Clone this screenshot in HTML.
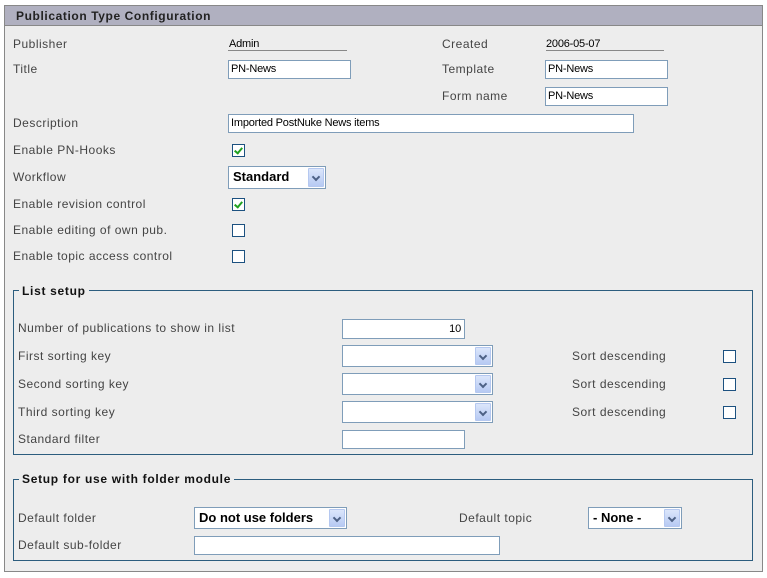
<!DOCTYPE html>
<html><head><style>
*{margin:0;padding:0;box-sizing:border-box}
body{width:767px;height:578px;background:#fff;font-family:"Liberation Sans",sans-serif;font-size:12px;color:#333;position:relative;overflow:hidden}
.a{position:absolute;white-space:nowrap}
.l{position:absolute;white-space:nowrap;line-height:14px;color:#444;letter-spacing:0.5px}
.inp{position:absolute;background:#fff;border:1px solid #7f9db9;font-size:11px;line-height:17px;padding-left:2px;color:#000;letter-spacing:-0.2px}
.cb{position:absolute;width:13px;height:13px;border:1px solid #1c5180;background:#fff}
.cb.on::after{content:"";position:absolute;left:3px;top:1px;width:3px;height:6px;border:solid #21a121;border-width:0 2px 2px 0;transform:rotate(40deg)}
.sel{position:absolute;background:#fff;border:1px solid #7f9db9;font-weight:bold;font-size:13px;line-height:20px;padding-left:4px;color:#000}
.sel .b{position:absolute;right:1px;top:1px;bottom:1px;width:16px;background:linear-gradient(#dbe6fb,#b7caf3);border:1px solid #b5c8f0;border-radius:1px}
.sel .b::after{content:"";position:absolute;left:4px;top:5px;width:4px;height:4px;border:solid #4d6185;border-width:0 2px 2px 0;transform:rotate(45deg)}
.fs{position:absolute;border:1px solid #2c5d7e}
.lg{position:absolute;background:#ededed;font-weight:bold;padding:0 3px;line-height:14px;color:#111;letter-spacing:0.7px}
.ul{position:absolute;height:1px;background:#888}
</style></head><body>
<div class="a" style="left:4px;top:5px;width:759px;height:567px;border:1px solid #888;background:#ededed"></div>
<div class="a" style="left:5px;top:6px;width:757px;height:20px;background:#b0b0c0;border-bottom:1px solid #888"></div>
<div class="a" style="left:16px;top:9px;font-weight:bold;color:#222;line-height:14px;letter-spacing:0.6px">Publication Type Configuration</div>

<div class="l" style="left:13px;top:37px">Publisher</div>
<div class="l" style="left:229px;top:37px;font-size:11px;color:#000;letter-spacing:-0.2px">Admin</div>
<div class="ul" style="left:228px;top:50px;width:119px"></div>
<div class="l" style="left:442px;top:37px">Created</div>
<div class="l" style="left:546px;top:37px;font-size:11px;color:#000;letter-spacing:-0.2px">2006-05-07</div>
<div class="ul" style="left:546px;top:50px;width:118px"></div>

<div class="l" style="left:13px;top:62px">Title</div>
<div class="inp" style="left:228px;top:60px;width:123px;height:19px">PN-News</div>
<div class="l" style="left:442px;top:62px">Template</div>
<div class="inp" style="left:545px;top:60px;width:123px;height:19px">PN-News</div>
<div class="l" style="left:442px;top:89px">Form name</div>
<div class="inp" style="left:545px;top:87px;width:123px;height:19px">PN-News</div>

<div class="l" style="left:13px;top:116px">Description</div>
<div class="inp" style="left:228px;top:114px;width:406px;height:19px">Imported PostNuke News items</div>
<div class="l" style="left:13px;top:143px">Enable PN-Hooks</div>
<div class="cb on" style="left:232px;top:144px"></div>
<div class="l" style="left:13px;top:170px">Workflow</div>
<div class="sel" style="left:228px;top:166px;width:98px;height:23px">Standard<div class="b"></div></div>
<div class="l" style="left:13px;top:197px">Enable revision control</div>
<div class="cb on" style="left:232px;top:198px"></div>
<div class="l" style="left:13px;top:223px">Enable editing of own pub.</div>
<div class="cb" style="left:232px;top:224px"></div>
<div class="l" style="left:13px;top:249px">Enable topic access control</div>
<div class="cb" style="left:232px;top:250px"></div>

<div class="fs" style="left:13px;top:290px;width:740px;height:165px"></div>
<div class="lg" style="left:19px;top:284px">List setup</div>
<div class="l" style="left:18px;top:321px">Number of publications to show in list</div>
<div class="inp" style="left:342px;top:319px;width:123px;height:20px;text-align:right;padding-right:3px;line-height:18px">10</div>
<div class="l" style="left:18px;top:349px">First sorting key</div>
<div class="sel" style="left:342px;top:345px;width:151px;height:22px"><div class="b"></div></div>
<div class="l" style="left:572px;top:349px">Sort descending</div>
<div class="cb" style="left:723px;top:350px"></div>
<div class="l" style="left:18px;top:377px">Second sorting key</div>
<div class="sel" style="left:342px;top:373px;width:151px;height:22px"><div class="b"></div></div>
<div class="l" style="left:572px;top:377px">Sort descending</div>
<div class="cb" style="left:723px;top:378px"></div>
<div class="l" style="left:18px;top:405px">Third sorting key</div>
<div class="sel" style="left:342px;top:401px;width:151px;height:22px"><div class="b"></div></div>
<div class="l" style="left:572px;top:405px">Sort descending</div>
<div class="cb" style="left:723px;top:406px"></div>
<div class="l" style="left:18px;top:432px">Standard filter</div>
<div class="inp" style="left:342px;top:430px;width:123px;height:19px"></div>

<div class="fs" style="left:13px;top:479px;width:740px;height:82px"></div>
<div class="lg" style="left:19px;top:472px">Setup for use with folder module</div>
<div class="l" style="left:18px;top:511px">Default folder</div>
<div class="sel" style="left:194px;top:507px;width:153px;height:22px">Do not use folders<div class="b"></div></div>
<div class="l" style="left:459px;top:511px">Default topic</div>
<div class="sel" style="left:588px;top:507px;width:94px;height:22px">- None -<div class="b"></div></div>
<div class="l" style="left:18px;top:538px">Default sub-folder</div>
<div class="inp" style="left:194px;top:536px;width:306px;height:19px"></div>
</body></html>
